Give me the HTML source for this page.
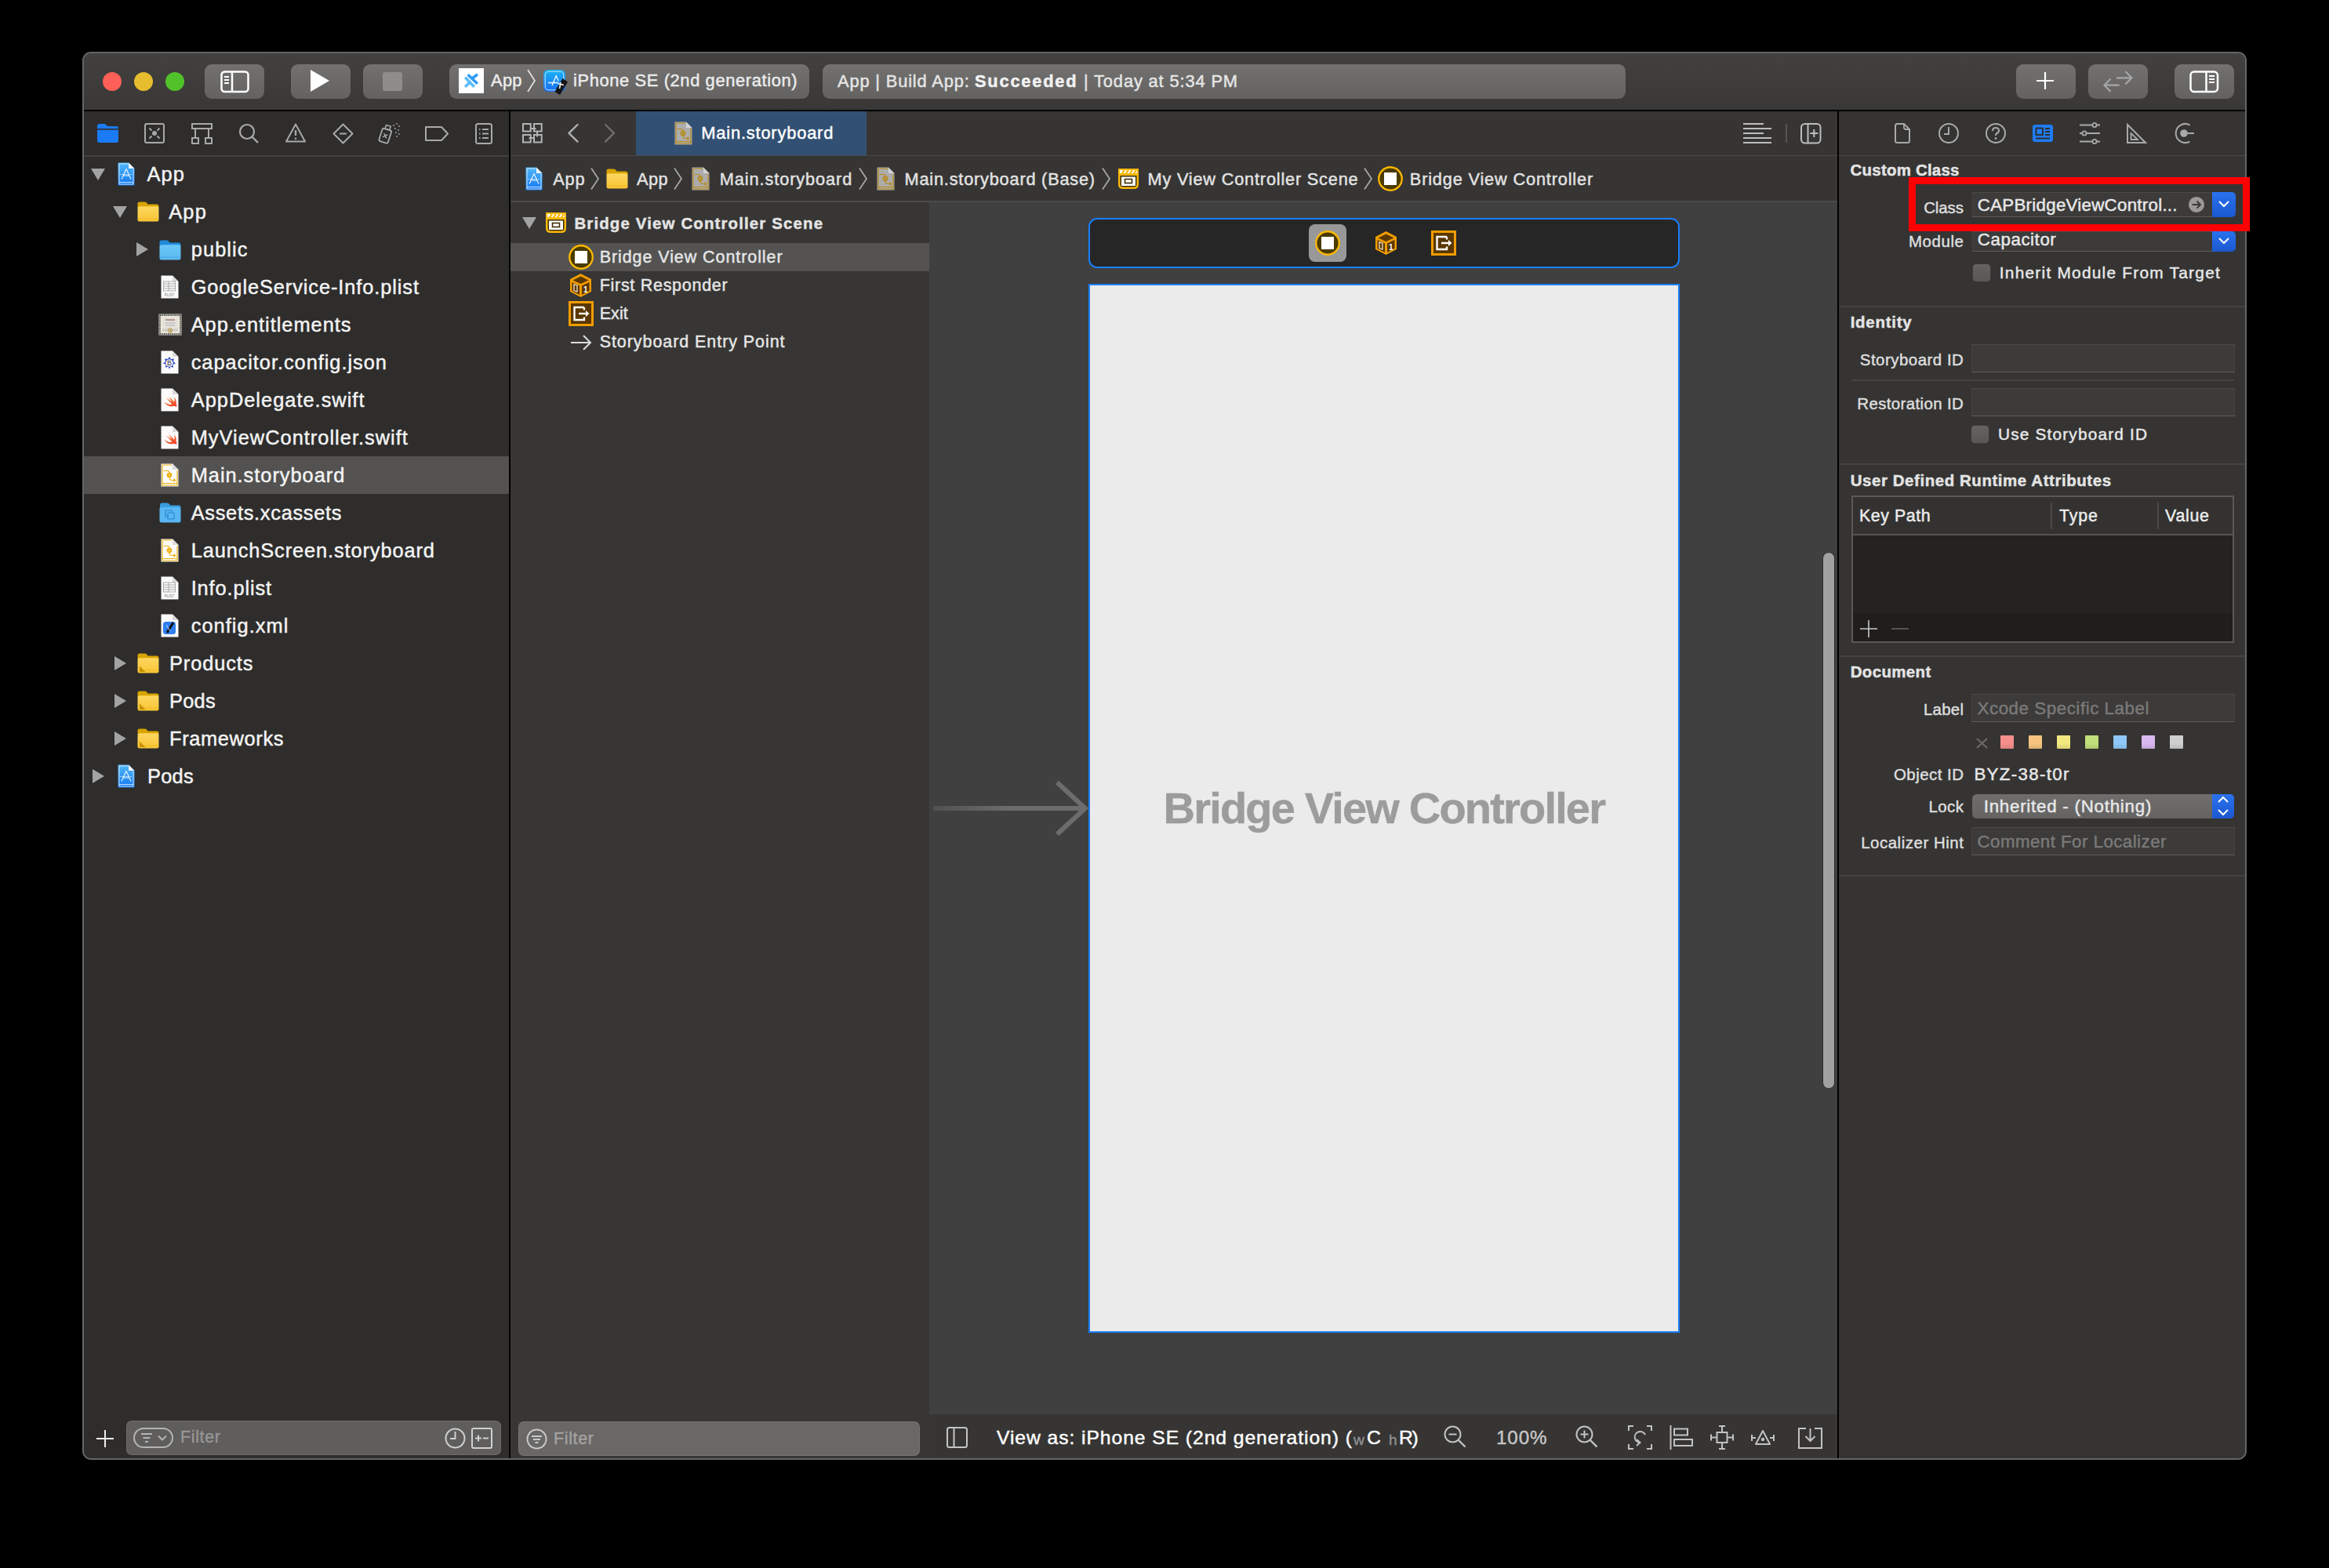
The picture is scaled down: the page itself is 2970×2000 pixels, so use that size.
<!DOCTYPE html><html><head><meta charset="utf-8"><style>
html,body{margin:0;padding:0;background:#000;width:2970px;height:2000px;overflow:hidden}
body{position:relative;font-family:"Liberation Sans",sans-serif}
.t{position:absolute;white-space:nowrap;-webkit-text-stroke:0.45px currentColor}
svg{overflow:visible}
</style></head><body>
<div style="position:absolute;left:105px;top:66px;width:2760px;height:1796px;border-radius:11px;background:#666565;"></div>
<div style="position:absolute;left:107px;top:68px;width:2756px;height:1792px;border-radius:9px;overflow:hidden;background:#2e2d2c;">
<div style="position:absolute;left:-107px;top:-68px;width:2970px;height:2000px">
<div style="position:absolute;left:107px;top:68px;width:2756px;height:72px;background:linear-gradient(#42413f,#393837)"></div>
<div style="position:absolute;left:107px;top:140px;width:2756px;height:2px;background:#000"></div>
<div style="position:absolute;left:131px;top:92px;width:24px;height:24px;background:#fe5f57;border-radius:50%"></div>
<div style="position:absolute;left:171px;top:92px;width:24px;height:24px;background:#e6bd2f;border-radius:50%"></div>
<div style="position:absolute;left:211px;top:92px;width:24px;height:24px;background:#52c22b;border-radius:50%"></div>
<div style="position:absolute;left:261px;top:82px;width:76px;height:44px;background:linear-gradient(#72716f,#636261);border-radius:9px"></div>
<div style="position:absolute;left:371px;top:82px;width:76px;height:44px;background:linear-gradient(#72716f,#636261);border-radius:9px"></div>
<div style="position:absolute;left:463px;top:82px;width:76px;height:44px;background:linear-gradient(#72716f,#636261);border-radius:9px"></div>
<div style="position:absolute;left:2571px;top:82px;width:76px;height:44px;background:linear-gradient(#72716f,#636261);border-radius:9px"></div>
<div style="position:absolute;left:2663px;top:82px;width:76px;height:44px;background:linear-gradient(#72716f,#636261);border-radius:9px"></div>
<div style="position:absolute;left:2773px;top:82px;width:76px;height:44px;background:linear-gradient(#72716f,#636261);border-radius:9px"></div>
<svg style="position:absolute;left:281px;top:90px" width="38" height="28" viewBox="0 0 38 28"><rect x="1.5" y="1.5" width="34" height="25.5" rx="4" fill="none" stroke="#fff" stroke-width="2.5"/><line x1="15" y1="2" x2="15" y2="26" stroke="#fff" stroke-width="2.5"/><line x1="5" y1="8" x2="11" y2="8" stroke="#fff" stroke-width="2"/><line x1="5" y1="12" x2="11" y2="12" stroke="#fff" stroke-width="2"/><line x1="5" y1="16" x2="11" y2="16" stroke="#fff" stroke-width="2"/></svg>
<svg style="position:absolute;left:394px;top:89px" width="30" height="30" viewBox="0 0 30 30"><path d="M2 0 L26 14 L2 28 Z" fill="#fff"/></svg>
<div style="position:absolute;left:488px;top:92px;width:25px;height:24px;background:#8e8d8c;border-radius:3px"></div>
<div style="position:absolute;left:573px;top:82px;width:459px;height:44px;background:linear-gradient(#72716f,#636261);border-radius:9px"></div>
<div style="position:absolute;left:585px;top:87px;width:32px;height:32px;background:#fff"></div>
<svg style="position:absolute;left:585px;top:87px" width="32" height="32" viewBox="0 0 32 32"><g stroke-width="3.6" stroke-linecap="square"><path d="M13 9.5 L22.5 18.5 M18.5 12 L22.5 9" stroke="#2f9bf7"/><path d="M9.5 13 L18.5 22.5 M9.5 22.5 L13 19" stroke="#5bbcfb"/></g></svg>
<div class="t" style="left:626.00px;top:92.42px;font-size:21.86px;line-height:21.86px;color:#ececec;font-weight:400;letter-spacing:0.300px;">App</div>
<svg style="position:absolute;left:672px;top:89px" width="12" height="28" viewBox="0 0 12 28"><path d="M1 0 L10 14 L1 28" fill="none" stroke="#e8e8e8" stroke-width="1.6"/></svg>
<svg style="position:absolute;left:693px;top:89px" width="28" height="28" viewBox="0 0 28 28"><defs><linearGradient id="asg" x1="0" y1="0" x2="0" y2="1"><stop offset="0" stop-color="#19b4f6"/><stop offset="1" stop-color="#1b6cf0"/></linearGradient></defs><rect x="0" y="0" width="28" height="28" rx="6" fill="url(#asg)"/><rect x="2.2" y="2.2" width="23.6" height="23.6" rx="4.5" fill="none" stroke="#bfe6ff" stroke-width="1"/><path d="M16.5 7 L11 20 M16 7 L19 14 M6 16.5 L19 16.5" stroke="#e6f4ff" stroke-width="1.4" fill="none"/><path d="M24.5 11 L31 15.5 L21 32 L14.5 28 Z" fill="#141414"/><path d="M18.5 17.5 L26 19.5 M22 16 L20.5 24" stroke="#f0f0f0" stroke-width="1.6"/></svg>
<div class="t" style="left:731.00px;top:92.42px;font-size:21.86px;line-height:21.86px;color:#ececec;font-weight:400;letter-spacing:0.628px;">iPhone SE (2nd generation)</div>
<div style="position:absolute;left:1049px;top:82px;width:1024px;height:44px;background:linear-gradient(#72716f,#636261);border-radius:9px"></div>
<div class="t" style="left:1068.00px;top:93.42px;font-size:21.86px;line-height:21.86px;color:#e6e6e6;font-weight:400;letter-spacing:0.837px;">App | Build App:</div>
<div class="t" style="left:1243.00px;top:93.42px;font-size:21.86px;line-height:21.86px;color:#f2f2f2;font-weight:700;letter-spacing:1.762px;">Succeeded</div>
<div class="t" style="left:1382.00px;top:93.42px;font-size:21.86px;line-height:21.86px;color:#e6e6e6;font-weight:400;letter-spacing:0.856px;">| Today at 5:34 PM</div>
<svg style="position:absolute;left:2597px;top:92px" width="22" height="22" viewBox="0 0 22 22"><line x1="11" y1="0" x2="11" y2="22" stroke="#fff" stroke-width="2.2"/><line x1="0" y1="11" x2="22" y2="11" stroke="#fff" stroke-width="2.2"/></svg>
<svg style="position:absolute;left:2680px;top:88px" width="42" height="32" viewBox="0 0 42 32"><path d="M19 11.3 L38.5 11.3 M30.4 3.2 L38.5 11.3 L30.4 19.4" fill="none" stroke="#a6a6a6" stroke-width="2.2"/><path d="M22.7 20.7 L3.5 20.7 M11.5 12.6 L3.5 20.7 L11.5 28.8" fill="none" stroke="#a6a6a6" stroke-width="2.2"/></svg>
<svg style="position:absolute;left:2792px;top:90px" width="38" height="28" viewBox="0 0 38 28"><rect x="1.5" y="1.5" width="34.5" height="25.5" rx="4.5" fill="none" stroke="#fff" stroke-width="2.5"/><line x1="21.5" y1="2" x2="21.5" y2="26" stroke="#fff" stroke-width="2.5"/><line x1="25" y1="7" x2="32" y2="7" stroke="#fff" stroke-width="2"/><line x1="25" y1="11" x2="32" y2="11" stroke="#fff" stroke-width="2"/><line x1="25" y1="15" x2="32" y2="15" stroke="#fff" stroke-width="2"/></svg>
<div style="position:absolute;left:107px;top:142px;width:542px;height:1718px;background:#2e2d2c"></div>
<div style="position:absolute;left:107px;top:198px;width:542px;height:2px;background:#434241"></div>
<div style="position:absolute;left:649px;top:142px;width:2px;height:1718px;background:#000"></div>
<svg style="position:absolute;left:124px;top:158px" width="27" height="24" viewBox="0 0 27 24"><path d="M0 3 Q0 0 3 0 L9 0 Q11 0 12 2 L13 3 L24 3 Q27 3 27 6 L27 21 Q27 24 24 24 L3 24 Q0 24 0 21 Z" fill="#1b7bf6"/><rect x="0" y="6" width="27" height="1.6" fill="#2e2d2c"/></svg>
<svg style="position:absolute;left:184px;top:157px" width="26" height="26" viewBox="0 0 26 26"><rect x="1" y="1" width="24" height="24" rx="2" fill="none" stroke="#a9a9a9" stroke-width="2"/><circle cx="13" cy="13" r="3" fill="#a9a9a9"/><path d="M6.5 6.5 L9.5 9.5 M19.5 6.5 L16.5 9.5 M6.5 19.5 L9.5 16.5 M19.5 19.5 L16.5 16.5" stroke="#a9a9a9" stroke-width="1.8"/></svg>
<svg style="position:absolute;left:244px;top:157px" width="27" height="27" viewBox="0 0 27 27"><rect x="1" y="1" width="25" height="6" fill="none" stroke="#a9a9a9" stroke-width="2"/><path d="M5 7 L5 19 M22 7 L22 19" stroke="#a9a9a9" stroke-width="2"/><rect x="1" y="19" width="8" height="7" fill="none" stroke="#a9a9a9" stroke-width="2"/><rect x="18" y="19" width="8" height="7" fill="none" stroke="#a9a9a9" stroke-width="2"/></svg>
<svg style="position:absolute;left:304px;top:157px" width="26" height="26" viewBox="0 0 26 26"><circle cx="11" cy="11" r="9" fill="none" stroke="#a9a9a9" stroke-width="2.2"/><path d="M17.5 17.5 L25 25" stroke="#a9a9a9" stroke-width="2.4"/></svg>
<svg style="position:absolute;left:364px;top:157px" width="26" height="25" viewBox="0 0 26 25"><path d="M13 1.5 L25 23.5 L1 23.5 Z" fill="none" stroke="#a9a9a9" stroke-width="2" stroke-linejoin="round"/><path d="M13 9 L13 16" stroke="#a9a9a9" stroke-width="2.4"/><circle cx="13" cy="19.8" r="1.3" fill="#a9a9a9"/></svg>
<svg style="position:absolute;left:424px;top:157px" width="27" height="27" viewBox="0 0 27 27"><path d="M13.5 1.5 L25.5 13.5 L13.5 25.5 L1.5 13.5 Z" fill="none" stroke="#a9a9a9" stroke-width="2" stroke-linejoin="round"/><path d="M9 13.5 L18 13.5" stroke="#a9a9a9" stroke-width="2.2"/></svg>
<svg style="position:absolute;left:482px;top:156px" width="30" height="28" viewBox="0 0 30 28"><g transform="rotate(18 10 18)"><rect x="3" y="9" width="12" height="17" rx="2" fill="none" stroke="#a9a9a9" stroke-width="1.8"/><rect x="6" y="4" width="6" height="5" fill="none" stroke="#a9a9a9" stroke-width="1.6"/><path d="M6.5 15 L11.5 20 M11.5 15 L6.5 20" stroke="#a9a9a9" stroke-width="1.5"/></g><g fill="#a9a9a9"><circle cx="20" cy="4" r="0.9"/><circle cx="24" cy="2" r="0.9"/><circle cx="27" cy="5" r="0.9"/><circle cx="22" cy="8" r="0.9"/><circle cx="26" cy="10" r="0.9"/><circle cx="23" cy="13" r="0.9"/><circle cx="27" cy="15" r="0.9"/><circle cx="24" cy="18" r="0.9"/></g></svg>
<svg style="position:absolute;left:542px;top:161px" width="30" height="19" viewBox="0 0 30 19"><path d="M1 1 L21 1 L29 9.5 L21 18 L1 18 Z" fill="none" stroke="#a9a9a9" stroke-width="2" stroke-linejoin="round"/></svg>
<svg style="position:absolute;left:606px;top:157px" width="22" height="27" viewBox="0 0 22 27"><rect x="1" y="1" width="20" height="25" rx="2.5" fill="none" stroke="#a9a9a9" stroke-width="2"/><path d="M5 8 L6.5 8 M9 8 L17 8 M5 13.5 L6.5 13.5 M9 13.5 L17 13.5 M5 19 L6.5 19 M9 19 L17 19" stroke="#a9a9a9" stroke-width="1.8"/></svg>
<div style="position:absolute;left:107px;top:582px;width:542px;height:48px;background:#535251"></div>
<svg style="position:absolute;left:116px;top:215px" width="18" height="15" viewBox="0 0 18 15"><path d="M0 0 L18 0 L9 15 Z" fill="#a3a3a3"/></svg>
<svg style="position:absolute;left:150px;top:207px" width="22" height="30" viewBox="0 0 22 30"><defs><linearGradient id="pg150_207" x1="0" y1="0" x2="0" y2="1"><stop offset="0" stop-color="#52b9f8"/><stop offset="1" stop-color="#1277f2"/></linearGradient></defs><path d="M0.5 0.5 L14 0.5 L21.5 8 L21.5 29.5 L0.5 29.5 Z" fill="url(#pg150_207)"/><path d="M14 0.5 L14 8 L21.5 8 Z" fill="#f2f8ff"/><path d="M2 2 L13 2 M2 2 L2 28 L20 28 L20 9 M2 25.5 L20 25.5" stroke="#d9ecff" stroke-width="0.9" fill="none"/><path d="M11 8.5 L5 21.5 M11 8.5 L17 21.5 M7 17 L15 17" stroke="#f0f8ff" stroke-width="1.1" fill="none"/><path d="M3.5 15.5 L18.5 15.5" stroke="#f0f8ff" stroke-width="0.9" stroke-dasharray="1.5 1"/></svg>
<div class="t" style="left:187.40px;top:210.42px;font-size:25.39px;line-height:25.39px;color:#f4f4f4;font-weight:400;letter-spacing:1.200px;">App</div>
<svg style="position:absolute;left:144px;top:263px" width="18" height="15" viewBox="0 0 18 15"><path d="M0 0 L18 0 L9 15 Z" fill="#a3a3a3"/></svg>
<svg style="position:absolute;left:175px;top:257px" width="28" height="26" viewBox="0 0 28 26"><defs><linearGradient id="fg175_257" x1="0" y1="0" x2="0" y2="1"><stop offset="0" stop-color="#fdd760"/><stop offset="1" stop-color="#f8c434"/></linearGradient></defs><path d="M0.5 3 Q0.5 0.5 3 0.5 L9.5 0.5 Q11.5 0.5 12.5 2 L13.5 3.5 L25 3.5 Q27.5 3.5 27.5 6 L27.5 8 L0.5 8 Z" fill="#d8a400"/><rect x="0.5" y="6.2" width="27" height="19.3" rx="2.5" fill="url(#fg175_257)"/><rect x="0.5" y="21.5" width="27" height="1" fill="#d8a400" opacity="0.35"/></svg>
<div class="t" style="left:215.30px;top:258.42px;font-size:25.39px;line-height:25.39px;color:#f4f4f4;font-weight:400;letter-spacing:1.150px;">App</div>
<svg style="position:absolute;left:174px;top:309px" width="15" height="18" viewBox="0 0 15 18"><path d="M0 0 L15 9 L0 18 Z" fill="#a3a3a3"/></svg>
<svg style="position:absolute;left:203px;top:306px" width="28" height="26" viewBox="0 0 28 26"><defs><linearGradient id="fg203_306" x1="0" y1="0" x2="0" y2="1"><stop offset="0" stop-color="#6cc8f7"/><stop offset="1" stop-color="#5bb9ee"/></linearGradient></defs><path d="M0.5 3 Q0.5 0.5 3 0.5 L9.5 0.5 Q11.5 0.5 12.5 2 L13.5 3.5 L25 3.5 Q27.5 3.5 27.5 6 L27.5 8 L0.5 8 Z" fill="#1f8bd9"/><rect x="0.5" y="6.2" width="27" height="19.3" rx="2.5" fill="url(#fg203_306)"/><rect x="0.5" y="21.5" width="27" height="1" fill="#1f8bd9" opacity="0.35"/></svg>
<div class="t" style="left:243.70px;top:306.42px;font-size:25.39px;line-height:25.39px;color:#f4f4f4;font-weight:400;letter-spacing:1.110px;">public</div>
<svg style="position:absolute;left:205px;top:351px" width="23" height="30" viewBox="0 0 23 30"><path d="M0.5 0.5 L15 0.5 L22.5 8 L22.5 29.5 L0.5 29.5 Z" fill="#fbfbfb"/><path d="M15 0.5 L15 8 L22.5 8 Z" fill="#d9d9d9"/><g stroke="#9a9a9a" stroke-width="0.8"><rect x="3.5" y="8" width="15" height="12" fill="none"/><path d="M3.5 11 L18.5 11 M3.5 14 L18.5 14 M3.5 17 L18.5 17 M10 8 L10 20"/></g><text x="11" y="27" font-size="4.5" text-anchor="middle" fill="#777" font-family="Liberation Sans">PLIST</text></svg>
<div class="t" style="left:243.70px;top:354.42px;font-size:25.39px;line-height:25.39px;color:#f4f4f4;font-weight:400;letter-spacing:0.907px;">GoogleService-Info.plist</div>
<svg style="position:absolute;left:202px;top:400px" width="30" height="28" viewBox="0 0 30 28"><rect x="0.5" y="0.5" width="29" height="27" fill="#ece8d8"/><rect x="1.8" y="1.8" width="26.4" height="24.4" fill="none" stroke="#6a6a6a" stroke-width="2.2" stroke-dasharray="2 0.6"/><rect x="5" y="5" width="20" height="18" fill="#e3e1da"/><path d="M9 8 L21 8" stroke="#8a4a4a" stroke-width="1"/><path d="M8.5 12 L21.5 12 M9 15 L21 15" stroke="#a0a0a0" stroke-width="0.7"/><rect x="5" y="19" width="20" height="4" fill="#d0cfca"/><circle cx="15" cy="21.5" r="3.2" fill="#c6b07a"/></svg>
<div class="t" style="left:243.70px;top:402.42px;font-size:25.39px;line-height:25.39px;color:#f4f4f4;font-weight:400;letter-spacing:0.987px;">App.entitlements</div>
<svg style="position:absolute;left:205px;top:447px" width="23" height="30" viewBox="0 0 23 30"><path d="M0.5 0.5 L15 0.5 L22.5 8 L22.5 29.5 L0.5 29.5 Z" fill="#fbfbfb"/><path d="M15 0.5 L15 8 L22.5 8 Z" fill="#d9d9d9"/><path d="M11 8 L13 11 L17 10.5 L16 14 L19 16.5 L15.5 18 L16 22 L12.5 20.5 L11 24 L9.5 20.5 L6 22 L6.5 18 L3 16.5 L6 14 L5 10.5 L9 11 Z" fill="#3d4fc4"/><circle cx="11" cy="16" r="4.6" fill="#fff"/><text x="11" y="19.3" font-size="9" text-anchor="middle" fill="#222" font-family="Liberation Sans">B</text></svg>
<div class="t" style="left:243.70px;top:450.42px;font-size:25.39px;line-height:25.39px;color:#f4f4f4;font-weight:400;letter-spacing:0.963px;">capacitor.config.json</div>
<svg style="position:absolute;left:205px;top:495px" width="23" height="30" viewBox="0 0 23 30"><path d="M0.5 0.5 L15 0.5 L22.5 8 L22.5 29.5 L0.5 29.5 Z" fill="#fbfbfb"/><path d="M15 0.5 L15 8 L22.5 8 Z" fill="#d9d9d9"/><defs><linearGradient id="sw" x1="0" y1="0" x2="1" y2="1"><stop offset="0" stop-color="#f88a36"/><stop offset="1" stop-color="#f03a2a"/></linearGradient></defs><path d="M4 17.5 Q10 22 14.5 20.5 Q10 16.5 7 12.5 Q11 15.5 14.5 17.5 Q12 14 10 11 Q15.5 15 17 18 Q18.5 15 17 11.5 Q20.5 15 19.5 19.5 Q21 22 20 24 Q18.5 22.5 16.5 23 Q9 25 4 17.5 Z" fill="url(#sw)"/></svg>
<div class="t" style="left:243.70px;top:498.42px;font-size:25.39px;line-height:25.39px;color:#f4f4f4;font-weight:400;letter-spacing:1.016px;">AppDelegate.swift</div>
<svg style="position:absolute;left:205px;top:543px" width="23" height="30" viewBox="0 0 23 30"><path d="M0.5 0.5 L15 0.5 L22.5 8 L22.5 29.5 L0.5 29.5 Z" fill="#fbfbfb"/><path d="M15 0.5 L15 8 L22.5 8 Z" fill="#d9d9d9"/><defs><linearGradient id="sw" x1="0" y1="0" x2="1" y2="1"><stop offset="0" stop-color="#f88a36"/><stop offset="1" stop-color="#f03a2a"/></linearGradient></defs><path d="M4 17.5 Q10 22 14.5 20.5 Q10 16.5 7 12.5 Q11 15.5 14.5 17.5 Q12 14 10 11 Q15.5 15 17 18 Q18.5 15 17 11.5 Q20.5 15 19.5 19.5 Q21 22 20 24 Q18.5 22.5 16.5 23 Q9 25 4 17.5 Z" fill="url(#sw)"/></svg>
<div class="t" style="left:243.70px;top:546.42px;font-size:25.39px;line-height:25.39px;color:#f4f4f4;font-weight:400;letter-spacing:1.019px;">MyViewController.swift</div>
<svg style="position:absolute;left:205px;top:591px" width="23" height="30" viewBox="0 0 23 30"><path d="M0.5 0.5 L15 0.5 L22.5 8 L22.5 29.5 L0.5 29.5 Z" fill="#fbfbfb"/><path d="M15 0.5 L15 8 L22.5 8 Z" fill="#dcdcdc"/><path d="M2 2 L14 2 M2 2 L2 28 L21 28 L21 9 M2 25.5 L21 25.5" stroke="#ecb10f" stroke-width="1.2" fill="none"/><path d="M3.5 9.5 L9 9.5 Q11 9.5 11 12" stroke="#ecb10f" stroke-width="1.2" fill="none"/><circle cx="11" cy="15" r="3.3" fill="#ecb10f"/><circle cx="11" cy="15" r="0.8" fill="#fff"/><path d="M11 18 Q11 21.5 14 21.5 L18.5 21.5 M16.5 19.5 L18.5 21.5 L16.5 23.5" stroke="#ecb10f" stroke-width="1.2" fill="none"/></svg>
<div class="t" style="left:243.70px;top:594.42px;font-size:25.39px;line-height:25.39px;color:#f4f4f4;font-weight:400;letter-spacing:0.975px;">Main.storyboard</div>
<svg style="position:absolute;left:203px;top:641px" width="28" height="26" viewBox="0 0 28 26"><path d="M1 3 Q1 0.5 3.5 0.5 L10 0.5 Q12 0.5 13 2 L14 3.5 L25 3.5 Q27.5 3.5 27.5 6 L27.5 7 L1 7 Z" fill="#3a9be0"/><rect x="0.5" y="6" width="27" height="19.5" rx="2.5" fill="#58b6f2"/><rect x="8" y="10" width="8" height="8" rx="1" fill="none" stroke="#2a86cf" stroke-width="1.2"/><rect x="11" y="13" width="8" height="8" rx="1" fill="#58b6f2" stroke="#2a86cf" stroke-width="1.2"/></svg>
<div class="t" style="left:243.70px;top:642.42px;font-size:25.39px;line-height:25.39px;color:#f4f4f4;font-weight:400;letter-spacing:0.707px;">Assets.xcassets</div>
<svg style="position:absolute;left:205px;top:687px" width="23" height="30" viewBox="0 0 23 30"><path d="M0.5 0.5 L15 0.5 L22.5 8 L22.5 29.5 L0.5 29.5 Z" fill="#fbfbfb"/><path d="M15 0.5 L15 8 L22.5 8 Z" fill="#dcdcdc"/><path d="M2 2 L14 2 M2 2 L2 28 L21 28 L21 9 M2 25.5 L21 25.5" stroke="#ecb10f" stroke-width="1.2" fill="none"/><path d="M3.5 9.5 L9 9.5 Q11 9.5 11 12" stroke="#ecb10f" stroke-width="1.2" fill="none"/><circle cx="11" cy="15" r="3.3" fill="#ecb10f"/><circle cx="11" cy="15" r="0.8" fill="#fff"/><path d="M11 18 Q11 21.5 14 21.5 L18.5 21.5 M16.5 19.5 L18.5 21.5 L16.5 23.5" stroke="#ecb10f" stroke-width="1.2" fill="none"/></svg>
<div class="t" style="left:243.70px;top:690.42px;font-size:25.39px;line-height:25.39px;color:#f4f4f4;font-weight:400;letter-spacing:0.893px;">LaunchScreen.storyboard</div>
<svg style="position:absolute;left:205px;top:735px" width="23" height="30" viewBox="0 0 23 30"><path d="M0.5 0.5 L15 0.5 L22.5 8 L22.5 29.5 L0.5 29.5 Z" fill="#fbfbfb"/><path d="M15 0.5 L15 8 L22.5 8 Z" fill="#d9d9d9"/><g stroke="#9a9a9a" stroke-width="0.8"><rect x="3.5" y="8" width="15" height="12" fill="none"/><path d="M3.5 11 L18.5 11 M3.5 14 L18.5 14 M3.5 17 L18.5 17 M10 8 L10 20"/></g><text x="11" y="27" font-size="4.5" text-anchor="middle" fill="#777" font-family="Liberation Sans">PLIST</text></svg>
<div class="t" style="left:243.70px;top:738.42px;font-size:25.39px;line-height:25.39px;color:#f4f4f4;font-weight:400;letter-spacing:0.872px;">Info.plist</div>
<svg style="position:absolute;left:205px;top:783px" width="23" height="30" viewBox="0 0 23 30"><path d="M0.5 0.5 L15 0.5 L22.5 8 L22.5 29.5 L0.5 29.5 Z" fill="#fbfbfb"/><path d="M15 0.5 L15 8 L22.5 8 Z" fill="#d9d9d9"/><rect x="3" y="10" width="16" height="16" rx="3.5" fill="#2b7ef0"/><path d="M8 24 L16 11" stroke="#111" stroke-width="3"/><path d="M7 14 L12 22" stroke="#cfe2ff" stroke-width="1"/></svg>
<div class="t" style="left:243.70px;top:786.42px;font-size:25.39px;line-height:25.39px;color:#f4f4f4;font-weight:400;letter-spacing:1.044px;">config.xml</div>
<svg style="position:absolute;left:146px;top:837px" width="15" height="18" viewBox="0 0 15 18"><path d="M0 0 L15 9 L0 18 Z" fill="#a3a3a3"/></svg>
<svg style="position:absolute;left:175px;top:833px" width="28" height="26" viewBox="0 0 28 26"><defs><linearGradient id="fg175_833" x1="0" y1="0" x2="0" y2="1"><stop offset="0" stop-color="#fdd760"/><stop offset="1" stop-color="#f8c434"/></linearGradient></defs><path d="M0.5 3 Q0.5 0.5 3 0.5 L9.5 0.5 Q11.5 0.5 12.5 2 L13.5 3.5 L25 3.5 Q27.5 3.5 27.5 6 L27.5 8 L0.5 8 Z" fill="#d8a400"/><rect x="0.5" y="6.2" width="27" height="19.3" rx="2.5" fill="url(#fg175_833)"/><rect x="0.5" y="21.5" width="27" height="1" fill="#d8a400" opacity="0.35"/><path d="M3 16.5 L3 24 L10.5 24 Z" fill="#c89200"/></svg>
<div class="t" style="left:216.00px;top:834.42px;font-size:25.39px;line-height:25.39px;color:#f4f4f4;font-weight:400;letter-spacing:0.886px;">Products</div>
<svg style="position:absolute;left:146px;top:885px" width="15" height="18" viewBox="0 0 15 18"><path d="M0 0 L15 9 L0 18 Z" fill="#a3a3a3"/></svg>
<svg style="position:absolute;left:175px;top:881px" width="28" height="26" viewBox="0 0 28 26"><defs><linearGradient id="fg175_881" x1="0" y1="0" x2="0" y2="1"><stop offset="0" stop-color="#fdd760"/><stop offset="1" stop-color="#f8c434"/></linearGradient></defs><path d="M0.5 3 Q0.5 0.5 3 0.5 L9.5 0.5 Q11.5 0.5 12.5 2 L13.5 3.5 L25 3.5 Q27.5 3.5 27.5 6 L27.5 8 L0.5 8 Z" fill="#d8a400"/><rect x="0.5" y="6.2" width="27" height="19.3" rx="2.5" fill="url(#fg175_881)"/><rect x="0.5" y="21.5" width="27" height="1" fill="#d8a400" opacity="0.35"/><path d="M3 16.5 L3 24 L10.5 24 Z" fill="#c89200"/></svg>
<div class="t" style="left:216.00px;top:882.42px;font-size:25.39px;line-height:25.39px;color:#f4f4f4;font-weight:400;letter-spacing:0.283px;">Pods</div>
<svg style="position:absolute;left:146px;top:933px" width="15" height="18" viewBox="0 0 15 18"><path d="M0 0 L15 9 L0 18 Z" fill="#a3a3a3"/></svg>
<svg style="position:absolute;left:175px;top:929px" width="28" height="26" viewBox="0 0 28 26"><defs><linearGradient id="fg175_929" x1="0" y1="0" x2="0" y2="1"><stop offset="0" stop-color="#fdd760"/><stop offset="1" stop-color="#f8c434"/></linearGradient></defs><path d="M0.5 3 Q0.5 0.5 3 0.5 L9.5 0.5 Q11.5 0.5 12.5 2 L13.5 3.5 L25 3.5 Q27.5 3.5 27.5 6 L27.5 8 L0.5 8 Z" fill="#d8a400"/><rect x="0.5" y="6.2" width="27" height="19.3" rx="2.5" fill="url(#fg175_929)"/><rect x="0.5" y="21.5" width="27" height="1" fill="#d8a400" opacity="0.35"/><path d="M3 16.5 L3 24 L10.5 24 Z" fill="#c89200"/></svg>
<div class="t" style="left:216.00px;top:930.42px;font-size:25.39px;line-height:25.39px;color:#f4f4f4;font-weight:400;letter-spacing:0.650px;">Frameworks</div>
<svg style="position:absolute;left:118px;top:981px" width="15" height="18" viewBox="0 0 15 18"><path d="M0 0 L15 9 L0 18 Z" fill="#a3a3a3"/></svg>
<svg style="position:absolute;left:150px;top:975px" width="22" height="30" viewBox="0 0 22 30"><defs><linearGradient id="pg150_975" x1="0" y1="0" x2="0" y2="1"><stop offset="0" stop-color="#52b9f8"/><stop offset="1" stop-color="#1277f2"/></linearGradient></defs><path d="M0.5 0.5 L14 0.5 L21.5 8 L21.5 29.5 L0.5 29.5 Z" fill="url(#pg150_975)"/><path d="M14 0.5 L14 8 L21.5 8 Z" fill="#f2f8ff"/><path d="M2 2 L13 2 M2 2 L2 28 L20 28 L20 9 M2 25.5 L20 25.5" stroke="#d9ecff" stroke-width="0.9" fill="none"/><path d="M11 8.5 L5 21.5 M11 8.5 L17 21.5 M7 17 L15 17" stroke="#f0f8ff" stroke-width="1.1" fill="none"/><path d="M3.5 15.5 L18.5 15.5" stroke="#f0f8ff" stroke-width="0.9" stroke-dasharray="1.5 1"/></svg>
<div class="t" style="left:188.00px;top:978.42px;font-size:25.39px;line-height:25.39px;color:#f4f4f4;font-weight:400;letter-spacing:0.283px;">Pods</div>
<svg style="position:absolute;left:123px;top:1824px" width="22" height="22" viewBox="0 0 22 22"><path d="M11 0 L11 22 M0 11 L22 11" stroke="#eee" stroke-width="2"/></svg>
<div style="position:absolute;left:161px;top:1812px;width:478px;height:44px;background:#5f5e5d;border-radius:7px;box-shadow:inset 0 0 0 1px rgba(255,255,255,0.09)"></div>
<div style="position:absolute;left:170px;top:1821px;width:51px;height:26px;border:2px solid #b4b4b4;border-radius:13px;box-sizing:border-box"></div>
<svg style="position:absolute;left:180px;top:1828px" width="34" height="13" viewBox="0 0 34 13"><path d="M0 1 L14 1 M2.5 6 L11.5 6 M5 11 L9 11" stroke="#b4b4b4" stroke-width="2"/><path d="M22 3.5 L27 8.5 L32 3.5" fill="none" stroke="#b4b4b4" stroke-width="2"/></svg>
<div class="t" style="left:230.00px;top:1823.32px;font-size:21.39px;line-height:21.39px;color:#969594;font-weight:400;letter-spacing:0.690px;">Filter</div>
<svg style="position:absolute;left:567px;top:1821px" width="27" height="27" viewBox="0 0 27 27"><circle cx="13.5" cy="13.5" r="12" fill="none" stroke="#d0d0d0" stroke-width="2"/><path d="M13.5 5 L13.5 14 L7 14" fill="none" stroke="#d0d0d0" stroke-width="2"/></svg>
<svg style="position:absolute;left:601px;top:1821px" width="27" height="27" viewBox="0 0 27 27"><rect x="1" y="1" width="25" height="25" rx="2" fill="none" stroke="#d0d0d0" stroke-width="2"/><path d="M5 13.5 L13 13.5 M9 9.5 L9 17.5 M15 13.5 L22 13.5" stroke="#d0d0d0" stroke-width="2"/></svg>
<div style="position:absolute;left:651px;top:142px;width:1692px;height:56px;background:#363534"></div>
<div style="position:absolute;left:651px;top:198px;width:1692px;height:1px;background:#4b4a49"></div>
<div style="position:absolute;left:651px;top:199px;width:1692px;height:57px;background:#363534"></div>
<div style="position:absolute;left:651px;top:256px;width:1692px;height:2px;background:#4b4a49"></div>
<div style="position:absolute;left:2343px;top:142px;width:2px;height:1718px;background:#000"></div>
<svg style="position:absolute;left:666px;top:157px" width="27" height="27" viewBox="0 0 27 27"><g fill="none" stroke="#b4b4b4" stroke-width="2"><rect x="1" y="1" width="9.7" height="9.5"/><rect x="15" y="1" width="9.7" height="9.5"/><rect x="1" y="15" width="9.7" height="9.5"/><rect x="15" y="15" width="9.7" height="9.5"/><path d="M10.7 7 L17.5 7 M19 10.5 L19 17.5 M8.5 19 L15 19"/></g></svg>
<svg style="position:absolute;left:723px;top:157px" width="16" height="26" viewBox="0 0 16 26"><path d="M13.5 2 L2.5 12.8 L13.5 23.6" fill="none" stroke="#b0b0b0" stroke-width="2.4" stroke-linecap="round" stroke-linejoin="round"/></svg>
<svg style="position:absolute;left:770px;top:157px" width="16" height="26" viewBox="0 0 16 26"><path d="M2 2 L13 12.8 L2 23.6" fill="none" stroke="#6f6e6d" stroke-width="2.4" stroke-linecap="round" stroke-linejoin="round"/></svg>
<div style="position:absolute;left:811px;top:142px;width:294px;height:56px;background:#325073"></div>
<svg style="position:absolute;left:860px;top:155px" width="23" height="30" viewBox="0 0 23 30"><path d="M0.5 0.5 L15 0.5 L22.5 8 L22.5 29.5 L0.5 29.5 Z" fill="#acacac"/><path d="M15 0.5 L15 8 L22.5 8 Z" fill="#d2d2d2"/><path d="M2 2 L14 2 M2 2 L2 28 L21 28 L21 9 M2 25.5 L21 25.5" stroke="#b8890f" stroke-width="1.1" fill="none"/><path d="M3.5 9.5 L9 9.5 Q11 9.5 11 12" stroke="#b8890f" stroke-width="1.1" fill="none"/><circle cx="11" cy="15" r="3.4" fill="#b8890f"/><circle cx="11" cy="15" r="1.7" fill="none" stroke="#acacac" stroke-width="0.7"/><path d="M11 18 Q11 21.5 14 21.5 L18.5 21.5 M16.5 19.5 L18.5 21.5 L16.5 23.5" stroke="#b8890f" stroke-width="1.1" fill="none"/></svg>
<div class="t" style="left:894.30px;top:159.44px;font-size:21.95px;line-height:21.95px;color:#ffffff;font-weight:400;letter-spacing:0.771px;">Main.storyboard</div>
<svg style="position:absolute;left:2223px;top:156px" width="37" height="28" viewBox="0 0 37 28"><path d="M0 2 L26 2 M0 8 L36 8 M0 14 L26 14 M0 20 L36 20 M0 26 L36 26" stroke="#bdbdbd" stroke-width="2.1"/></svg>
<div style="position:absolute;left:2277px;top:158px;width:2px;height:24px;background:#555453"></div>
<svg style="position:absolute;left:2296px;top:157px" width="27" height="27" viewBox="0 0 27 27"><rect x="1" y="1" width="24.5" height="24.5" rx="4.5" fill="none" stroke="#bdbdbd" stroke-width="2"/><path d="M9.5 1 L9.5 25.5" stroke="#bdbdbd" stroke-width="2"/><path d="M17.3 8 L17.3 18 M12.3 13 L22.3 13" stroke="#bdbdbd" stroke-width="2"/></svg>
<svg style="position:absolute;left:670px;top:213px" width="22" height="30" viewBox="0 0 22 30"><defs><linearGradient id="pg670_213" x1="0" y1="0" x2="0" y2="1"><stop offset="0" stop-color="#52b9f8"/><stop offset="1" stop-color="#1277f2"/></linearGradient></defs><path d="M0.5 0.5 L14 0.5 L21.5 8 L21.5 29.5 L0.5 29.5 Z" fill="url(#pg670_213)"/><path d="M14 0.5 L14 8 L21.5 8 Z" fill="#f2f8ff"/><path d="M2 2 L13 2 M2 2 L2 28 L20 28 L20 9 M2 25.5 L20 25.5" stroke="#d9ecff" stroke-width="0.9" fill="none"/><path d="M11 8.5 L5 21.5 M11 8.5 L17 21.5 M7 17 L15 17" stroke="#f0f8ff" stroke-width="1.1" fill="none"/><path d="M3.5 15.5 L18.5 15.5" stroke="#f0f8ff" stroke-width="0.9" stroke-dasharray="1.5 1"/></svg>
<div class="t" style="left:705.20px;top:217.60px;font-size:21.76px;line-height:21.76px;color:#e3e3e3;font-weight:400;letter-spacing:0.800px;">App</div>
<svg style="position:absolute;left:753px;top:214px" width="11" height="28" viewBox="0 0 11 28"><path d="M1 0.5 L10 14 L1 27.5" fill="none" stroke="#a6a6a6" stroke-width="1.8"/></svg>
<svg style="position:absolute;left:773px;top:215px" width="28" height="26" viewBox="0 0 28 26"><defs><linearGradient id="fg773_215" x1="0" y1="0" x2="0" y2="1"><stop offset="0" stop-color="#fdd760"/><stop offset="1" stop-color="#f8c434"/></linearGradient></defs><path d="M0.5 3 Q0.5 0.5 3 0.5 L9.5 0.5 Q11.5 0.5 12.5 2 L13.5 3.5 L25 3.5 Q27.5 3.5 27.5 6 L27.5 8 L0.5 8 Z" fill="#d8a400"/><rect x="0.5" y="6.2" width="27" height="19.3" rx="2.5" fill="url(#fg773_215)"/><rect x="0.5" y="21.5" width="27" height="1" fill="#d8a400" opacity="0.35"/></svg>
<div class="t" style="left:812.00px;top:217.60px;font-size:21.76px;line-height:21.76px;color:#e3e3e3;font-weight:400;letter-spacing:0.500px;">App</div>
<svg style="position:absolute;left:859px;top:214px" width="11" height="28" viewBox="0 0 11 28"><path d="M1 0.5 L10 14 L1 27.5" fill="none" stroke="#a6a6a6" stroke-width="1.8"/></svg>
<svg style="position:absolute;left:881.5px;top:213px" width="23" height="30" viewBox="0 0 23 30"><path d="M0.5 0.5 L15 0.5 L22.5 8 L22.5 29.5 L0.5 29.5 Z" fill="#acacac"/><path d="M15 0.5 L15 8 L22.5 8 Z" fill="#d2d2d2"/><path d="M2 2 L14 2 M2 2 L2 28 L21 28 L21 9 M2 25.5 L21 25.5" stroke="#b8890f" stroke-width="1.1" fill="none"/><path d="M3.5 9.5 L9 9.5 Q11 9.5 11 12" stroke="#b8890f" stroke-width="1.1" fill="none"/><circle cx="11" cy="15" r="3.4" fill="#b8890f"/><circle cx="11" cy="15" r="1.7" fill="none" stroke="#acacac" stroke-width="0.7"/><path d="M11 18 Q11 21.5 14 21.5 L18.5 21.5 M16.5 19.5 L18.5 21.5 L16.5 23.5" stroke="#b8890f" stroke-width="1.1" fill="none"/></svg>
<div class="t" style="left:917.70px;top:217.60px;font-size:21.76px;line-height:21.76px;color:#e3e3e3;font-weight:400;letter-spacing:0.907px;">Main.storyboard</div>
<svg style="position:absolute;left:1095px;top:214px" width="11" height="28" viewBox="0 0 11 28"><path d="M1 0.5 L10 14 L1 27.5" fill="none" stroke="#a6a6a6" stroke-width="1.8"/></svg>
<svg style="position:absolute;left:1117.5px;top:213px" width="23" height="30" viewBox="0 0 23 30"><path d="M0.5 0.5 L15 0.5 L22.5 8 L22.5 29.5 L0.5 29.5 Z" fill="#acacac"/><path d="M15 0.5 L15 8 L22.5 8 Z" fill="#d2d2d2"/><path d="M2 2 L14 2 M2 2 L2 28 L21 28 L21 9 M2 25.5 L21 25.5" stroke="#b8890f" stroke-width="1.1" fill="none"/><path d="M3.5 9.5 L9 9.5 Q11 9.5 11 12" stroke="#b8890f" stroke-width="1.1" fill="none"/><circle cx="11" cy="15" r="3.4" fill="#b8890f"/><circle cx="11" cy="15" r="1.7" fill="none" stroke="#acacac" stroke-width="0.7"/><path d="M11 18 Q11 21.5 14 21.5 L18.5 21.5 M16.5 19.5 L18.5 21.5 L16.5 23.5" stroke="#b8890f" stroke-width="1.1" fill="none"/></svg>
<div class="t" style="left:1153.60px;top:217.60px;font-size:21.76px;line-height:21.76px;color:#e3e3e3;font-weight:400;letter-spacing:0.783px;">Main.storyboard (Base)</div>
<svg style="position:absolute;left:1405px;top:214px" width="11" height="28" viewBox="0 0 11 28"><path d="M1 0.5 L10 14 L1 27.5" fill="none" stroke="#a6a6a6" stroke-width="1.8"/></svg>
<svg style="position:absolute;left:1425px;top:214px" width="28" height="28" viewBox="0 0 28 28"><path d="M1 1 L27 1 L27 21 Q27 27 21 27 L7 27 Q1 27 1 21 Z" fill="#fbb80c"/><path d="M3 3 L25 3 L25 7 L3 7 Z" fill="#fff"/><path d="M6 7 L9 3 M11 7 L14 3 M16 7 L19 3 M21 7 L24 3" stroke="#fbb80c" stroke-width="2.3"/><path d="M3.5 10 L24.5 10 L24.5 21 Q24.5 24.5 21 24.5 L7 24.5 Q3.5 24.5 3.5 21 Z" fill="#3d2f00"/><rect x="5" y="11.5" width="18" height="11.5" fill="#fff"/><rect x="9.5" y="14.5" width="9" height="5" fill="none" stroke="#3d2f00" stroke-width="1.6"/></svg>
<div class="t" style="left:1463.50px;top:217.60px;font-size:21.76px;line-height:21.76px;color:#e3e3e3;font-weight:400;letter-spacing:0.798px;">My View Controller Scene</div>
<svg style="position:absolute;left:1739px;top:214px" width="11" height="28" viewBox="0 0 11 28"><path d="M1 0.5 L10 14 L1 27.5" fill="none" stroke="#a6a6a6" stroke-width="1.8"/></svg>
<svg style="position:absolute;left:1757px;top:212px" width="32" height="32" viewBox="0 0 32 32"><circle cx="16" cy="16" r="15.9" fill="#fdb900"/><circle cx="16" cy="16" r="13.6" fill="#4a3b00"/><rect x="8" y="8" width="16" height="16" fill="#fff"/></svg>
<div class="t" style="left:1797.80px;top:217.60px;font-size:21.76px;line-height:21.76px;color:#e3e3e3;font-weight:400;letter-spacing:0.829px;">Bridge View Controller</div>
<div style="position:absolute;left:651px;top:258px;width:534px;height:1602px;background:#373634"></div>
<svg style="position:absolute;left:666px;top:277px" width="18" height="15" viewBox="0 0 18 15"><path d="M0 0 L18 0 L9 15 Z" fill="#a3a3a3"/></svg>
<svg style="position:absolute;left:695px;top:270px" width="28" height="28" viewBox="0 0 28 28"><path d="M1 1 L27 1 L27 21 Q27 27 21 27 L7 27 Q1 27 1 21 Z" fill="#fbb80c"/><path d="M3 3 L25 3 L25 7 L3 7 Z" fill="#fff"/><path d="M6 7 L9 3 M11 7 L14 3 M16 7 L19 3 M21 7 L24 3" stroke="#fbb80c" stroke-width="2.3"/><path d="M3.5 10 L24.5 10 L24.5 21 Q24.5 24.5 21 24.5 L7 24.5 Q3.5 24.5 3.5 21 Z" fill="#3d2f00"/><rect x="5" y="11.5" width="18" height="11.5" fill="#fff"/><rect x="9.5" y="14.5" width="9" height="5" fill="none" stroke="#3d2f00" stroke-width="1.6"/></svg>
<div class="t" style="left:732.40px;top:274.51px;font-size:20.46px;line-height:20.46px;color:#e4e4e4;font-weight:700;letter-spacing:1.143px;">Bridge View Controller Scene</div>
<div style="position:absolute;left:651px;top:310px;width:534px;height:36px;background:#545352"></div>
<svg style="position:absolute;left:725px;top:312px" width="32" height="32" viewBox="0 0 32 32"><circle cx="16" cy="16" r="15.9" fill="#fdb900"/><circle cx="16" cy="16" r="13.6" fill="#4a3b00"/><rect x="8" y="8" width="16" height="16" fill="#fff"/></svg>
<div class="t" style="left:764.70px;top:317.74px;font-size:21.48px;line-height:21.48px;color:#e6e6e6;font-weight:400;letter-spacing:0.938px;">Bridge View Controller</div>
<svg style="position:absolute;left:726px;top:348px" width="29" height="32" viewBox="0 0 29 32"><path d="M14.5 1 L28 8 L28 24 L14.5 31 L1 24 L1 8 Z" fill="#f19c00"/><path d="M14.5 4.5 L24.5 9.5 L14.5 14 L4.5 9.5 Z" fill="#5a3700"/><path d="M3.5 12 L13 16.5 L13 28 L3.5 23 Z" fill="#5a3700"/><path d="M16 16.5 L25.5 12 L25.5 23 L16 28 Z" fill="#5a3700"/><rect x="6" y="15.5" width="4" height="8" fill="none" stroke="#f3e6cc" stroke-width="1.3" transform="skewY(20) translate(0,-3)"/><text x="20.8" y="25" font-size="10" font-weight="bold" text-anchor="middle" fill="#fff" font-family="Liberation Sans">1</text></svg>
<div class="t" style="left:764.70px;top:353.74px;font-size:21.48px;line-height:21.48px;color:#e6e6e6;font-weight:400;letter-spacing:0.729px;">First Responder</div>
<svg style="position:absolute;left:725px;top:384px" width="32" height="32" viewBox="0 0 32 32"><rect x="0" y="0" width="32" height="32" fill="#f19c00"/><rect x="3" y="3" width="26" height="26" fill="#5a3700"/><path d="M20 8 L7.5 8 L7.5 24 L20 24 L20 20.5" fill="none" stroke="#fff" stroke-width="2.4"/><path d="M20 11.5 L20 8" stroke="#fff" stroke-width="2.4"/><path d="M13 16 L23 16" stroke="#fff" stroke-width="2.4"/><path d="M22 12 L26.5 16 L22 20 Z" fill="#fff"/></svg>
<div class="t" style="left:764.70px;top:389.74px;font-size:21.48px;line-height:21.48px;color:#e6e6e6;font-weight:400;letter-spacing:0.067px;">Exit</div>
<svg style="position:absolute;left:728px;top:427px" width="27" height="20" viewBox="0 0 27 20"><path d="M0 10 L25 10 M16 1 L25 10 L16 19" fill="none" stroke="#dcdcdc" stroke-width="2"/></svg>
<div class="t" style="left:764.70px;top:425.74px;font-size:21.48px;line-height:21.48px;color:#e6e6e6;font-weight:400;letter-spacing:0.948px;">Storyboard Entry Point</div>
<div style="position:absolute;left:661px;top:1813px;width:512px;height:44px;background:#696867;border-radius:7px;box-shadow:inset 0 0 0 1px rgba(255,255,255,0.09)"></div>
<svg style="position:absolute;left:671px;top:1822px" width="27" height="27" viewBox="0 0 27 27"><circle cx="13.5" cy="13.5" r="12" fill="none" stroke="#c9c9c9" stroke-width="2"/><path d="M7 10 L20 10 M9 14 L18 14 M11.5 18 L15.5 18" stroke="#c9c9c9" stroke-width="2"/></svg>
<div class="t" style="left:706.00px;top:1825.32px;font-size:21.39px;line-height:21.39px;color:#a2a1a0;font-weight:400;letter-spacing:0.690px;">Filter</div>
<div style="position:absolute;left:1185px;top:258px;width:1158px;height:1546px;background:#404040"></div>
<svg style="position:absolute;left:1188px;top:995px" width="200" height="70" viewBox="0 0 200 70"><defs><linearGradient id="ag" gradientUnits="userSpaceOnUse" x1="0" y1="0" x2="200" y2="0"><stop offset="0" stop-color="#505050"/><stop offset="0.5" stop-color="#6c6c6c"/><stop offset="1" stop-color="#6c6c6c"/></linearGradient></defs><path d="M2 36 L195 36" stroke="url(#ag)" stroke-width="6"/><path d="M160 3 L196 36 L160 69" fill="none" stroke="#6c6c6c" stroke-width="6"/></svg>
<div style="position:absolute;left:1388px;top:278px;width:754px;height:64px;background:#262626;border:2.5px solid #1a7ef8;border-radius:11px;box-sizing:border-box"></div>
<div style="position:absolute;left:1669px;top:286px;width:48px;height:48px;background:#989898;border-radius:8px"></div>
<svg style="position:absolute;left:1677px;top:294px" width="32" height="32" viewBox="0 0 32 32"><circle cx="16" cy="16" r="15.9" fill="#fdb900"/><circle cx="16" cy="16" r="13.6" fill="#4a3b00"/><rect x="8" y="8" width="16" height="16" fill="#fff"/></svg>
<svg style="position:absolute;left:1753px;top:294px" width="29" height="32" viewBox="0 0 29 32"><path d="M14.5 1 L28 8 L28 24 L14.5 31 L1 24 L1 8 Z" fill="#f19c00"/><path d="M14.5 4.5 L24.5 9.5 L14.5 14 L4.5 9.5 Z" fill="#5a3700"/><path d="M3.5 12 L13 16.5 L13 28 L3.5 23 Z" fill="#5a3700"/><path d="M16 16.5 L25.5 12 L25.5 23 L16 28 Z" fill="#5a3700"/><rect x="6" y="15.5" width="4" height="8" fill="none" stroke="#f3e6cc" stroke-width="1.3" transform="skewY(20) translate(0,-3)"/><text x="20.8" y="25" font-size="10" font-weight="bold" text-anchor="middle" fill="#fff" font-family="Liberation Sans">1</text></svg>
<svg style="position:absolute;left:1825px;top:294px" width="32" height="32" viewBox="0 0 32 32"><rect x="0" y="0" width="32" height="32" fill="#f19c00"/><rect x="3" y="3" width="26" height="26" fill="#5a3700"/><path d="M20 8 L7.5 8 L7.5 24 L20 24 L20 20.5" fill="none" stroke="#fff" stroke-width="2.4"/><path d="M20 11.5 L20 8" stroke="#fff" stroke-width="2.4"/><path d="M13 16 L23 16" stroke="#fff" stroke-width="2.4"/><path d="M22 12 L26.5 16 L22 20 Z" fill="#fff"/></svg>
<div style="position:absolute;left:1388px;top:362px;width:754px;height:1338px;background:#ebebeb;border:2px solid #1a7ef8;box-sizing:border-box"></div>
<div class="t" style="left:1483.60px;top:1003.20px;font-size:56px;line-height:56px;color:#9c9c9c;font-weight:700;letter-spacing:-1.821px;">Bridge View Controller</div>
<div style="position:absolute;left:2324px;top:704px;width:16px;height:685px;background:#a1a1a1;border:1px solid #2e2e2e;border-radius:8px;box-sizing:border-box"></div>
<div style="position:absolute;left:1185px;top:1804px;width:1158px;height:56px;background:#363534"></div>
<svg style="position:absolute;left:1207px;top:1820px" width="27" height="27" viewBox="0 0 27 27"><rect x="1" y="1" width="25" height="25" rx="2.5" fill="none" stroke="#c4c4c4" stroke-width="2"/><path d="M9.5 1 L9.5 26" stroke="#c4c4c4" stroke-width="2"/></svg>
<div class="t" style="left:1271.00px;top:1822.17px;font-size:24.74px;line-height:24.74px;color:#ffffff;font-weight:400;letter-spacing:0.906px;">View as: iPhone SE (2nd generation) (</div>
<div class="t" style="left:1726.05px;top:1826.91px;font-size:19.16px;line-height:19.16px;color:#8e8e8e;font-weight:400;letter-spacing:0.000px;">w</div>
<div class="t" style="left:1743.00px;top:1822.17px;font-size:24.74px;line-height:24.74px;color:#ffffff;font-weight:400;letter-spacing:0.000px;">C</div>
<div class="t" style="left:1771.00px;top:1826.91px;font-size:19.16px;line-height:19.16px;color:#8e8e8e;font-weight:400;letter-spacing:0.000px;">h</div>
<div class="t" style="left:1784.00px;top:1822.17px;font-size:24.74px;line-height:24.74px;color:#ffffff;font-weight:400;letter-spacing:0.000px;">R</div>
<div class="t" style="left:1800.50px;top:1822.17px;font-size:24.74px;line-height:24.74px;color:#ffffff;font-weight:400;letter-spacing:0.000px;">)</div>
<svg style="position:absolute;left:1841px;top:1818px" width="29" height="29" viewBox="0 0 29 29"><circle cx="11.5" cy="11.5" r="10" fill="none" stroke="#c2c2c2" stroke-width="2"/><path d="M18.5 18.5 L27.5 27.5" stroke="#c2c2c2" stroke-width="2.4"/><path d="M6.5 11.5 L16.5 11.5" stroke="#c2c2c2" stroke-width="2"/></svg>
<div class="t" style="left:1908.00px;top:1821.95px;font-size:24.18px;line-height:24.18px;color:#c6c6c6;font-weight:400;letter-spacing:0.883px;">100%</div>
<svg style="position:absolute;left:2009px;top:1818px" width="29" height="29" viewBox="0 0 29 29"><circle cx="11.5" cy="11.5" r="10" fill="none" stroke="#c2c2c2" stroke-width="2"/><path d="M18.5 18.5 L27.5 27.5" stroke="#c2c2c2" stroke-width="2.4"/><path d="M6.5 11.5 L16.5 11.5 M11.5 6.5 L11.5 16.5" stroke="#c2c2c2" stroke-width="2"/></svg>
<svg style="position:absolute;left:2076px;top:1818px" width="31" height="31" viewBox="0 0 31 31"><path d="M1 7 L1 1 L7 1 M24 1 L30 1 L30 7 M1 24 L1 30 L7 30 M30 24 L30 30 L24 30" fill="none" stroke="#c2c2c2" stroke-width="2"/><path d="M22 12 A7 7 0 1 0 15.5 22" fill="none" stroke="#c2c2c2" stroke-width="2"/><path d="M11 18 L15.5 22 L11 26" fill="none" stroke="#c2c2c2" stroke-width="2"/></svg>
<svg style="position:absolute;left:2129px;top:1818px" width="30" height="31" viewBox="0 0 30 31"><path d="M1.5 0 L1.5 31" stroke="#c2c2c2" stroke-width="2"/><rect x="6" y="4.5" width="17" height="8" fill="none" stroke="#c2c2c2" stroke-width="2"/><rect x="6" y="18" width="23" height="8" fill="none" stroke="#c2c2c2" stroke-width="2"/></svg>
<svg style="position:absolute;left:2181px;top:1818px" width="30" height="31" viewBox="0 0 30 31"><rect x="8.5" y="9" width="13" height="13" fill="none" stroke="#c2c2c2" stroke-width="2"/><path d="M15 0 L15 9 M11 1 L19 1 M15 22 L15 31 M11 30 L19 30 M0 15.5 L8.5 15.5 M1 11.5 L1 19.5 M21.5 15.5 L30 15.5 M29 11.5 L29 19.5" stroke="#c2c2c2" stroke-width="2"/></svg>
<svg style="position:absolute;left:2233px;top:1822px" width="30" height="24" viewBox="0 0 30 24"><path d="M15 3 L24 20 L6 20 Z" fill="none" stroke="#c2c2c2" stroke-width="2" stroke-linejoin="round"/><circle cx="15" cy="14" r="2.2" fill="#c2c2c2"/><path d="M0 12 L6 12 M1 8 L1 16 M24 12 L30 12 M29 8 L29 16" stroke="#c2c2c2" stroke-width="2"/></svg>
<svg style="position:absolute;left:2293px;top:1821px" width="31" height="27" viewBox="0 0 31 27"><path d="M10 1 L1 1 L1 26 L30 26 L30 1 L21 1" fill="none" stroke="#c2c2c2" stroke-width="2"/><path d="M15.5 1 L15.5 17 M9.5 11 L15.5 17 L21.5 11" fill="none" stroke="#c2c2c2" stroke-width="2"/></svg>
<div style="position:absolute;left:2345px;top:142px;width:518px;height:1718px;background:#353433"></div>
<div style="position:absolute;left:2345px;top:198px;width:518px;height:1px;background:#4b4a49"></div>
<svg style="position:absolute;left:2416px;top:157px" width="20" height="26" viewBox="0 0 20 26"><path d="M3.5 1 L12 1 L19 8 L19 22.5 Q19 25 16.5 25 L3.5 25 Q1 25 1 22.5 L1 3.5 Q1 1 3.5 1 Z" fill="none" stroke="#a9a9a9" stroke-width="2" stroke-linejoin="round"/><path d="M12 1 L12 5.5 Q12 8 14.5 8 L19 8" fill="none" stroke="#a9a9a9" stroke-width="1.8"/></svg>
<svg style="position:absolute;left:2472px;top:157px" width="26" height="26" viewBox="0 0 26 26"><circle cx="13" cy="13" r="12" fill="none" stroke="#a9a9a9" stroke-width="2"/><path d="M13 5 L13 14 L7 14" fill="none" stroke="#a9a9a9" stroke-width="2"/></svg>
<svg style="position:absolute;left:2532px;top:157px" width="26" height="26" viewBox="0 0 26 26"><circle cx="13" cy="13" r="12" fill="none" stroke="#a9a9a9" stroke-width="2"/><path d="M9 10 Q9 6 13 6 Q17 6 17 9.5 Q17 12 14.5 13 Q13 13.8 13 16" fill="none" stroke="#a9a9a9" stroke-width="2"/><circle cx="13" cy="19.5" r="1.4" fill="#a9a9a9"/></svg>
<svg style="position:absolute;left:2592px;top:159px" width="26" height="22" viewBox="0 0 26 22"><rect x="0" y="0" width="26" height="22" rx="3" fill="#1f7cf5"/><rect x="4.5" y="4.5" width="8.5" height="8.5" fill="none" stroke="#2e2d2c" stroke-width="1.9"/><path d="M16 5 L22 5 M16 9 L22 9 M16 13 L22 13 M4 17.5 L22 17.5" stroke="#2e2d2c" stroke-width="2"/></svg>
<svg style="position:absolute;left:2652px;top:157px" width="26" height="26" viewBox="0 0 26 26"><path d="M0 2.5 L26 2.5 M0 13 L26 13 M0 23.5 L26 23.5" stroke="#a9a9a9" stroke-width="1.8"/><circle cx="19" cy="2.5" r="2.6" fill="#353433" stroke="#a9a9a9" stroke-width="1.8"/><circle cx="6" cy="13" r="2.6" fill="#353433" stroke="#a9a9a9" stroke-width="1.8"/><circle cx="19" cy="23.5" r="2.6" fill="#353433" stroke="#a9a9a9" stroke-width="1.8"/></svg>
<svg style="position:absolute;left:2712px;top:158px" width="25" height="25" viewBox="0 0 25 25"><path d="M1 1 L24 24 L1 24 Z" fill="none" stroke="#a9a9a9" stroke-width="2" stroke-linejoin="miter"/><path d="M5.5 12 L14 20 L5.5 20 Z" fill="none" stroke="#a9a9a9" stroke-width="1.8"/></svg>
<svg style="position:absolute;left:2772px;top:157px" width="26" height="26" viewBox="0 0 26 26"><path d="M20.5 2.5 A12 12 0 1 0 20.5 23.5" fill="none" stroke="#a9a9a9" stroke-width="2"/><circle cx="13" cy="13" r="4.8" fill="#a9a9a9"/><path d="M13 13 L26 13" stroke="#a9a9a9" stroke-width="2"/></svg>
<div class="t" style="left:2359.60px;top:206.61px;font-size:20.46px;line-height:20.46px;color:#e4e4e4;font-weight:700;letter-spacing:0.232px;">Custom Class</div>
<div class="t" style="left:2453.20px;top:254.71px;font-size:20.46px;line-height:20.46px;color:#dedede;font-weight:400;letter-spacing:-0.088px;">Class</div>
<div style="position:absolute;left:2515px;top:245px;width:307px;height:32px;background:#3c3b3a;border-top:1px solid #4b4a49;border-bottom:1.5px solid #5e5d5c;border-left:1px solid #444342;border-right:1px solid #444342;box-sizing:border-box"></div>
<div class="t" style="left:2521.80px;top:251.13px;font-size:22.32px;line-height:22.32px;color:#e8e8e8;font-weight:400;letter-spacing:0.266px;">CAPBridgeViewControl...</div>
<svg style="position:absolute;left:2791px;top:251px" width="20" height="20" viewBox="0 0 20 20"><circle cx="10" cy="10" r="10" fill="#9b9a99"/><path d="M4.5 10 L15 10 M10.5 5.5 L15 10 L10.5 14.5" fill="none" stroke="#3a3938" stroke-width="2"/></svg>
<div style="position:absolute;left:2821px;top:245px;width:30px;height:32px;background:linear-gradient(#2a72ee,#1b58d0);border-radius:0 5px 5px 0"></div>
<svg style="position:absolute;left:2829px;top:256px" width="14" height="9" viewBox="0 0 14 9"><path d="M1 1 L7 7 L13 1" fill="none" stroke="#fff" stroke-width="2"/></svg>
<div class="t" style="left:2434.00px;top:298.41px;font-size:20.46px;line-height:20.46px;color:#dedede;font-weight:400;letter-spacing:0.580px;">Module</div>
<div style="position:absolute;left:2515px;top:295px;width:307px;height:26px;background:#3c3b3a;border-top:1px solid #4b4a49;border-bottom:1.5px solid #5e5d5c;border-left:1px solid #444342;border-right:1px solid #444342;box-sizing:border-box"></div>
<div class="t" style="left:2521.80px;top:295.03px;font-size:22.32px;line-height:22.32px;color:#e8e8e8;font-weight:400;letter-spacing:0.562px;">Capacitor</div>
<div style="position:absolute;left:2821px;top:295px;width:30px;height:26px;background:linear-gradient(#2a72ee,#1b58d0);border-radius:0 5px 5px 0"></div>
<svg style="position:absolute;left:2829px;top:303px" width="14" height="9" viewBox="0 0 14 9"><path d="M1 1 L7 7 L13 1" fill="none" stroke="#fff" stroke-width="2"/></svg>
<div style="position:absolute;left:2515px;top:336px;width:24px;height:24px;background:linear-gradient(#646362,#585756);border-radius:5px;border:1px solid #3a3a3a;box-sizing:border-box"></div>
<div class="t" style="left:2549.80px;top:338.29px;font-size:20.83px;line-height:20.83px;color:#e8e8e8;font-weight:400;letter-spacing:1.252px;">Inherit Module From Target</div>
<div style="position:absolute;left:2345px;top:390px;width:518px;height:2px;background:#444342"></div>
<div class="t" style="left:2359.70px;top:400.91px;font-size:20.46px;line-height:20.46px;color:#e4e4e4;font-weight:700;letter-spacing:0.750px;">Identity</div>
<div class="t" style="left:2371.80px;top:448.61px;font-size:20.46px;line-height:20.46px;color:#dedede;font-weight:400;letter-spacing:0.496px;">Storyboard ID</div>
<div style="position:absolute;left:2514px;top:439px;width:336px;height:36px;background:#3c3b3a;border-top:1px solid #4b4a49;border-bottom:1.5px solid #5e5d5c;border-left:1px solid #444342;border-right:1px solid #444342;box-sizing:border-box"></div>
<div style="position:absolute;left:2361px;top:484px;width:488px;height:2px;background:#444342"></div>
<div class="t" style="left:2368.30px;top:504.61px;font-size:20.46px;line-height:20.46px;color:#dedede;font-weight:400;letter-spacing:0.381px;">Restoration ID</div>
<div style="position:absolute;left:2514px;top:495px;width:336px;height:36px;background:#3c3b3a;border-top:1px solid #4b4a49;border-bottom:1.5px solid #5e5d5c;border-left:1px solid #444342;border-right:1px solid #444342;box-sizing:border-box"></div>
<div style="position:absolute;left:2513px;top:542px;width:24px;height:24px;background:linear-gradient(#646362,#585756);border-radius:5px;border:1px solid #3a3a3a;box-sizing:border-box"></div>
<div class="t" style="left:2548.00px;top:544.29px;font-size:20.83px;line-height:20.83px;color:#e8e8e8;font-weight:400;letter-spacing:1.166px;">Use Storyboard ID</div>
<div style="position:absolute;left:2345px;top:591px;width:518px;height:2px;background:#444342"></div>
<div class="t" style="left:2359.70px;top:602.61px;font-size:20.46px;line-height:20.46px;color:#e4e4e4;font-weight:700;letter-spacing:0.582px;">User Defined Runtime Attributes</div>
<div style="position:absolute;left:2361px;top:632px;width:488px;height:188px;background:#242322;border:2px solid #5a5958;box-sizing:border-box"></div>
<div style="position:absolute;left:2363px;top:634px;width:484px;height:48px;background:#333231"></div>
<div style="position:absolute;left:2363px;top:681px;width:484px;height:2px;background:#555453"></div>
<div style="position:absolute;left:2615px;top:641px;width:2px;height:34px;background:#4a4948"></div>
<div style="position:absolute;left:2751px;top:641px;width:2px;height:34px;background:#4a4948"></div>
<div style="position:absolute;left:2363px;top:783px;width:484px;height:35px;background:#1f1e1d"></div>
<div class="t" style="left:2371.00px;top:648.22px;font-size:21.39px;line-height:21.39px;color:#ececec;font-weight:400;letter-spacing:0.557px;">Key Path</div>
<div class="t" style="left:2626.00px;top:648.22px;font-size:21.39px;line-height:21.39px;color:#ececec;font-weight:400;letter-spacing:0.883px;">Type</div>
<div class="t" style="left:2761.00px;top:648.22px;font-size:21.39px;line-height:21.39px;color:#ececec;font-weight:400;letter-spacing:0.725px;">Value</div>
<svg style="position:absolute;left:2372px;top:791px" width="22" height="22" viewBox="0 0 22 22"><path d="M11 0 L11 22 M0 11 L22 11" stroke="#c8c8c8" stroke-width="1.6"/></svg>
<div style="position:absolute;left:2412px;top:801px;width:22px;height:2px;background:#555453"></div>
<div style="position:absolute;left:2345px;top:836px;width:518px;height:2px;background:#444342"></div>
<div class="t" style="left:2359.70px;top:846.61px;font-size:20.46px;line-height:20.46px;color:#e4e4e4;font-weight:700;letter-spacing:0.379px;">Document</div>
<div class="t" style="left:2453.00px;top:894.61px;font-size:20.46px;line-height:20.46px;color:#dedede;font-weight:400;letter-spacing:0.238px;">Label</div>
<div style="position:absolute;left:2514px;top:885px;width:336px;height:36px;background:#3c3b3a;border-top:1px solid #4b4a49;border-bottom:1.5px solid #5e5d5c;border-left:1px solid #444342;border-right:1px solid #444342;box-sizing:border-box"></div>
<div class="t" style="left:2521.50px;top:893.03px;font-size:22.32px;line-height:22.32px;color:#7a7978;font-weight:400;letter-spacing:0.555px;">Xcode Specific Label</div>
<svg style="position:absolute;left:2520px;top:941px" width="15" height="14" viewBox="0 0 15 14"><path d="M1 1 L14 13 M14 1 L1 13" stroke="#6a6968" stroke-width="2.2"/></svg>
<div style="position:absolute;left:2550.5px;top:938px;width:17.0px;height:17px;background:linear-gradient(#f68f8b,#f68f8b 60%,#0000001a);background-color:#f68f8b;border-radius:1px"></div>
<div style="position:absolute;left:2586.5px;top:938px;width:17.0px;height:17px;background:linear-gradient(#f6c47f,#f6c47f 60%,#0000001a);background-color:#f6c47f;border-radius:1px"></div>
<div style="position:absolute;left:2622.5px;top:938px;width:17.0px;height:17px;background:linear-gradient(#f3e87f,#f3e87f 60%,#0000001a);background-color:#f3e87f;border-radius:1px"></div>
<div style="position:absolute;left:2658.5px;top:938px;width:17.0px;height:17px;background:linear-gradient(#c1df7b,#c1df7b 60%,#0000001a);background-color:#c1df7b;border-radius:1px"></div>
<div style="position:absolute;left:2694.5px;top:938px;width:17.0px;height:17px;background:linear-gradient(#8ec8fa,#8ec8fa 60%,#0000001a);background-color:#8ec8fa;border-radius:1px"></div>
<div style="position:absolute;left:2730.5px;top:938px;width:17.0px;height:17px;background:linear-gradient(#d9b8f0,#d9b8f0 60%,#0000001a);background-color:#d9b8f0;border-radius:1px"></div>
<div style="position:absolute;left:2766.5px;top:938px;width:17.0px;height:17px;background:linear-gradient(#cfcfcf,#cfcfcf 60%,#0000001a);background-color:#cfcfcf;border-radius:1px"></div>
<div class="t" style="left:2415.00px;top:978.41px;font-size:20.46px;line-height:20.46px;color:#dedede;font-weight:400;letter-spacing:0.463px;">Object ID</div>
<div class="t" style="left:2517.40px;top:976.83px;font-size:22.32px;line-height:22.32px;color:#e8e8e8;font-weight:400;letter-spacing:1.317px;">BYZ-38-t0r</div>
<div class="t" style="left:2459.40px;top:1019.21px;font-size:20.46px;line-height:20.46px;color:#dedede;font-weight:400;letter-spacing:0.433px;">Lock</div>
<div style="position:absolute;left:2515px;top:1013px;width:334px;height:31px;background:linear-gradient(#6f6e6d,#646362);border-radius:6px"></div>
<div class="t" style="left:2529.70px;top:1017.63px;font-size:22.32px;line-height:22.32px;color:#e8e8e8;font-weight:400;letter-spacing:0.760px;">Inherited - (Nothing)</div>
<div style="position:absolute;left:2821px;top:1013px;width:28px;height:31px;background:linear-gradient(#2a72ee,#1b58d0);border-radius:0 5px 5px 0"></div>
<svg style="position:absolute;left:2828px;top:1016px" width="14" height="24" viewBox="0 0 14 24"><path d="M1 7 L7 1 L13 7 M1 17 L7 23 L13 17" fill="none" stroke="#fff" stroke-width="2"/></svg>
<div class="t" style="left:2373.20px;top:1064.91px;font-size:20.46px;line-height:20.46px;color:#dedede;font-weight:400;letter-spacing:0.527px;">Localizer Hint</div>
<div style="position:absolute;left:2514px;top:1055px;width:336px;height:36px;background:#3c3b3a;border-top:1px solid #4b4a49;border-bottom:1.5px solid #5e5d5c;border-left:1px solid #444342;border-right:1px solid #444342;box-sizing:border-box"></div>
<div class="t" style="left:2521.50px;top:1063.33px;font-size:22.32px;line-height:22.32px;color:#7a7978;font-weight:400;letter-spacing:0.453px;">Comment For Localizer</div>
<div style="position:absolute;left:2345px;top:1116px;width:518px;height:2px;background:#444342"></div>
</div></div>
<div style="position:absolute;left:2434px;top:226px;width:435px;height:69px;border:9px solid #ff0000;box-sizing:border-box"></div>
</body></html>
